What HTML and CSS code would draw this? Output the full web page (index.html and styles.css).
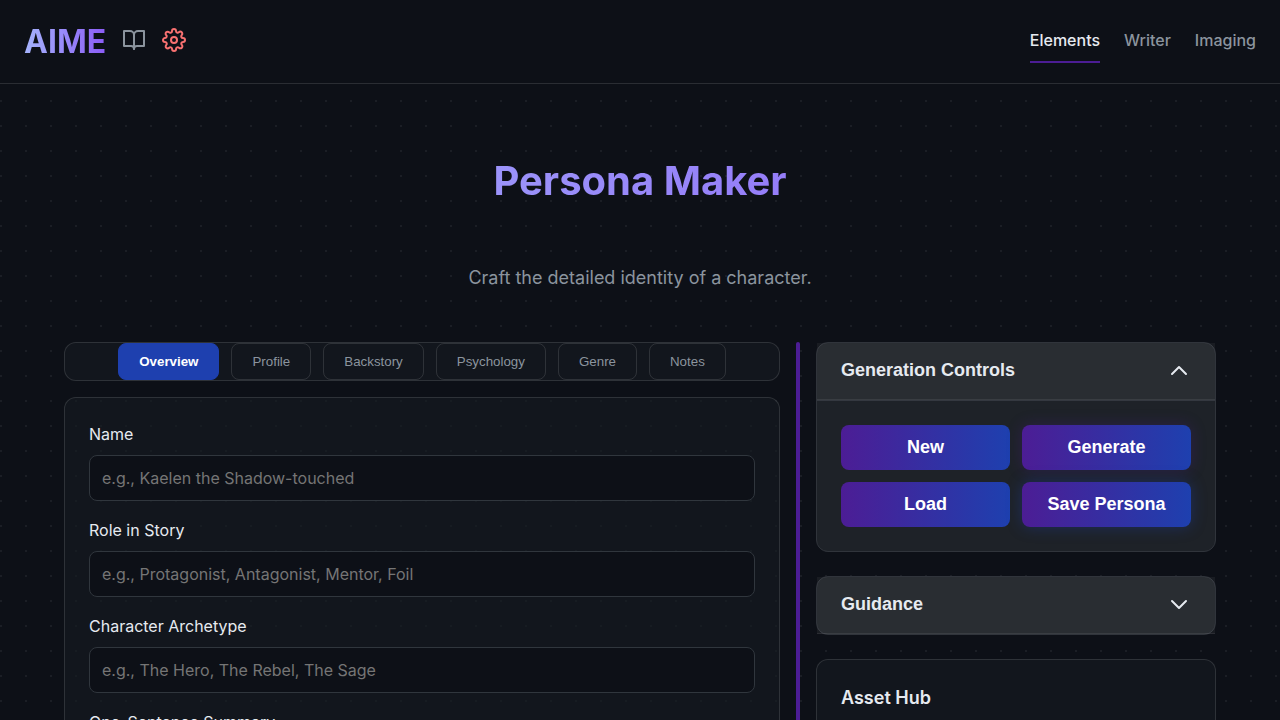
FILE: index.html
```html
<!DOCTYPE html>
<html lang="en">
<head>
<meta charset="utf-8">
<meta name="viewport" content="width=device-width, initial-scale=1">
<title>AIME - Persona Maker</title>
<link rel="stylesheet" href="styles.css">
</head>
<body>
<header class="site-header">
  <div class="brand">
    <a class="logo" href="#">AIME</a>
    <a class="icon-link" href="#" aria-label="Library">
      <svg class="icon" viewBox="0 0 24 24"><path d="M2 3h6a4 4 0 0 1 4 4v14a3 3 0 0 0-3-3H2z"/><path d="M22 3h-6a4 4 0 0 0-4 4v14a3 3 0 0 1 3-3h7z"/></svg>
    </a>
    <a class="icon-link icon-link-alert" href="#" aria-label="Settings">
      <svg class="icon" viewBox="0 0 24 24"><circle cx="12" cy="12" r="3"/><path d="M19.400 15a1.650 1.650 0 0 0 .33 1.820l.06.06a2 2 0 0 1 0 2.830 2 2 0 0 1-2.830 0l-.06-.06a1.650 1.650 0 0 0-1.820-.33 1.650 1.650 0 0 0-1 1.510V21a2 2 0 0 1-2 2 2 2 0 0 1-2-2v-.09A1.650 1.650 0 0 0 9 19.400a1.650 1.650 0 0 0-1.820.33l-.06.06a2 2 0 0 1-2.830 0 2 2 0 0 1 0-2.830l.06-.06a1.650 1.650 0 0 0 .33-1.820 1.650 1.650 0 0 0-1.510-1H3a2 2 0 0 1-2-2 2 2 0 0 1 2-2h.09A1.650 1.650 0 0 0 4.600 9a1.650 1.650 0 0 0-.33-1.820l-.06-.06a2 2 0 0 1 0-2.830 2 2 0 0 1 2.830 0l.06.06a1.650 1.650 0 0 0 1.820.33H9a1.650 1.650 0 0 0 1-1.510V3a2 2 0 0 1 2-2 2 2 0 0 1 2 2v.09a1.650 1.650 0 0 0 1 1.510 1.650 1.650 0 0 0 1.820-.33l.06-.06a2 2 0 0 1 2.830 0 2 2 0 0 1 0 2.830l-.06.06a1.650 1.650 0 0 0-.33 1.820V9a1.650 1.650 0 0 0 1.510 1H21a2 2 0 0 1 2 2 2 2 0 0 1-2 2h-.09a1.650 1.650 0 0 0-1.510 1z"/></svg>
    </a>
  </div>
  <nav class="main-nav">
    <a class="nav-link nav-link-active" href="#">Elements</a>
    <a class="nav-link" href="#">Writer</a>
    <a class="nav-link" href="#">Imaging</a>
  </nav>
</header>

<main class="page">
  <h1 class="page-title">Persona Maker</h1>
  <p class="page-subtitle">Craft the detailed identity of a character.</p>

  <div class="workspace">
    <section class="editor">
      <div class="tabs" role="tablist">
        <button class="tab tab-active" role="tab" aria-selected="true">Overview</button>
        <button class="tab" role="tab">Profile</button>
        <button class="tab" role="tab">Backstory</button>
        <button class="tab" role="tab">Psychology</button>
        <button class="tab" role="tab">Genre</button>
        <button class="tab" role="tab">Notes</button>
      </div>
      <form class="panel form">
        <div class="field">
          <label for="name">Name</label>
          <input id="name" type="text" placeholder="e.g., Kaelen the Shadow-touched">
        </div>
        <div class="field">
          <label for="role">Role in Story</label>
          <input id="role" type="text" placeholder="e.g., Protagonist, Antagonist, Mentor, Foil">
        </div>
        <div class="field">
          <label for="archetype">Character Archetype</label>
          <input id="archetype" type="text" placeholder="e.g., The Hero, The Rebel, The Sage">
        </div>
        <div class="field">
          <label for="summary">One-Sentence Summary</label>
          <input id="summary" type="text">
        </div>
      </form>
    </section>

    <div class="divider"></div>

    <aside class="sidebar">
      <section class="accordion">
        <button class="accordion-header" aria-expanded="true">
          <span>Generation Controls</span>
          <svg class="icon" viewBox="0 0 24 24"><path d="M5 16l7-7 7 7"/></svg>
        </button>
        <div class="accordion-body">
          <button class="action">New</button>
          <button class="action action-glow-purple">Generate</button>
          <button class="action">Load</button>
          <button class="action action-glow-blue">Save Persona</button>
        </div>
      </section>
      <section class="accordion">
        <button class="accordion-header" aria-expanded="false">
          <span>Guidance</span>
          <svg class="icon" viewBox="0 0 24 24"><path d="M5 9l7 7 7-7"/></svg>
        </button>
      </section>
      <section class="panel">
        <h2 class="panel-title">Asset Hub</h2>
      </section>
    </aside>
  </div>
</main>
</body>
</html>
```
FILE: styles.css
```css
:root {
  --bg: #0d1017;
  --text: #e6eaf0;
  --muted: #8b949e;
  --line: rgba(255, 255, 255, 0.12);
  --purple: #4c1d95;
  --blue: #1e40af;
}

* {
  box-sizing: border-box;
}

html {
  scrollbar-width: none;
}

body {
  margin: 0;
  color: var(--text);
  font-family: Inter, sans-serif;
  font-size: 16px;
  line-height: 25px;
  background-color: var(--bg);
  background-image: radial-gradient(circle at 1px 1px, rgba(255, 255, 255, 0.06) 1px, transparent 0);
  background-size: 25px 25px;
}

a {
  color: inherit;
  text-decoration: none;
}

.icon {
  display: block;
  width: 24px;
  height: 24px;
  fill: none;
  stroke: currentColor;
  stroke-width: 2;
  stroke-linecap: round;
  stroke-linejoin: round;
}

.site-header {
  display: flex;
  align-items: center;
  justify-content: space-between;
  padding: 16px 24px;
  background: var(--bg);
  border-bottom: 1px solid var(--line);
}

.brand {
  display: flex;
  align-items: center;
  gap: 16px;
}

.logo {
  font-size: 32px;
  font-weight: 700;
  line-height: 51px;
  color: transparent;
  background: linear-gradient(90deg, #a5b4fc, #8b5cf6);
  background-clip: text;
}

.icon-link {
  color: var(--muted);
  padding-bottom: 3px;
}

.icon-link-alert {
  color: #f87171;
}

.main-nav {
  display: flex;
  gap: 24px;
}

.nav-link {
  padding: 8px 0;
  font-weight: 500;
  color: var(--muted);
  border-bottom: 2px solid transparent;
}

.nav-link-active {
  color: var(--text);
  border-color: var(--purple);
}

.page {
  padding: 64px 64px 48px;
}

.page-title {
  margin: 0 0 48px;
  font-size: 40px;
  font-weight: 700;
  line-height: 66px;
  text-align: center;
  color: transparent;
  background: linear-gradient(90deg, #a5b4fc, #8b5cf6);
  background-clip: text;
}

.page-subtitle {
  margin: 0 0 48px;
  font-size: 18px;
  line-height: 32px;
  text-align: center;
  color: var(--muted);
}

.workspace {
  display: grid;
  grid-template-columns: minmax(0, 1fr) 4px 400px;
  gap: 16px;
}

.editor {
  display: flex;
  flex-direction: column;
  gap: 16px;
}

.tabs {
  display: flex;
  justify-content: center;
  gap: 12px;
  background: #12161d;
  border: 1px solid var(--line);
  border-radius: 12px;
}

.tab {
  padding: 10px 20px;
  font-family: "Liberation Sans", sans-serif;
  color: var(--muted);
  background: transparent;
  border: 1px solid var(--line);
  border-radius: 8px;
}

.tab-active {
  font-weight: 700;
  color: #fff;
  background: var(--blue);
  border-color: var(--blue);
}

.panel {
  padding: 24px;
  background: #12161d;
  border: 1px solid var(--line);
  border-radius: 12px;
}

.form {
  display: flex;
  flex-direction: column;
  gap: 17px;
  background: rgba(22, 27, 34, 0.6);
}

.field {
  display: flex;
  flex-direction: column;
  gap: 8px;
}

.field input {
  width: 100%;
  height: 46px;
  padding: 12px;
  font: inherit;
  color: var(--text);
  background: var(--bg);
  border: 1px solid #30363d;
  border-radius: 8px;
}

.field input::placeholder {
  color: #757575;
}

.divider {
  background: var(--purple);
  border-radius: 2px;
}

.sidebar {
  display: flex;
  flex-direction: column;
  gap: 24px;
}

.accordion {
  background: #1e2228;
  border: 1px solid #30343b;
  border-radius: 12px;
}

.accordion-header {
  display: flex;
  align-items: center;
  justify-content: space-between;
  width: 100%;
  padding: 13px 24px 15px;
  font-family: "Liberation Sans", sans-serif;
  font-size: 18px;
  font-weight: 700;
  line-height: 28px;
  color: var(--text);
  background: rgba(255, 255, 255, 0.05);
  border: 0;
  border-bottom: 1px solid rgba(255, 255, 255, 0.08);
}

.accordion-body {
  display: grid;
  grid-template-columns: 1fr 1fr;
  gap: 12px;
  padding: 24px;
  border-top: 1px solid #343840;
}

.action {
  padding: 12px;
  font-family: "Liberation Sans", sans-serif;
  font-size: 18px;
  font-weight: 700;
  line-height: 21px;
  color: #fff;
  background: linear-gradient(90deg, var(--purple), var(--blue));
  border: 0;
  border-radius: 8px;
}

.action-glow-purple {
  box-shadow: 0 0 15px rgba(76, 29, 149, 0.3);
}

.action-glow-blue {
  box-shadow: 0 0 15px rgba(30, 64, 175, 0.4);
}

.panel-title {
  margin: 0;
  font-size: 18px;
  font-weight: 600;
  line-height: 28px;
}
```
